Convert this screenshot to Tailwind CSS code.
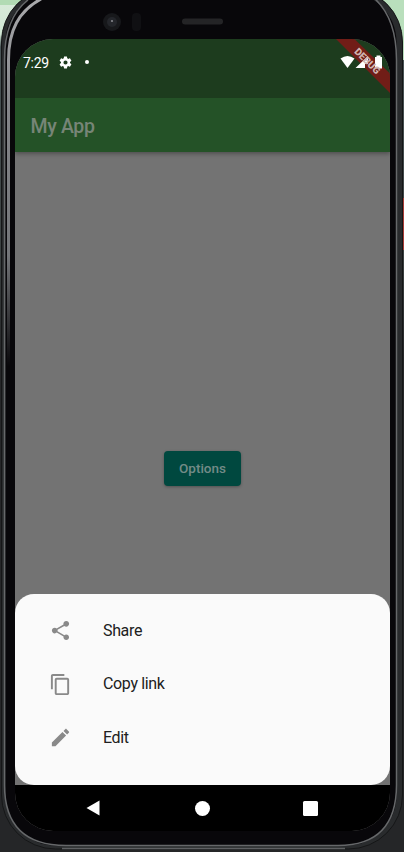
<!DOCTYPE html>
<html lang="en">
<head>
<meta charset="utf-8">
<title>My App</title>
<script src="https://cdn.jsdelivr.net/npm/@tailwindcss/browser@4"></script>
</head>
<body class="w-[404px] h-[852px] overflow-hidden bg-[#252628] font-['Roboto',sans-serif]">
<main class="relative w-[404px] h-[852px] overflow-hidden px-[15px] pt-[39px]">
  <svg class="absolute inset-0" width="404" height="852" viewBox="0 0 404 852" fill="none">
    <defs>
      <linearGradient id="outside" x1="0" y1="0" x2="0" y2="852" gradientUnits="userSpaceOnUse">
        <stop offset="0" stop-color="#d8ead9"/><stop offset=".04" stop-color="#d2e8d5"/><stop offset=".055" stop-color="#4a5557"/><stop offset=".3" stop-color="#3c4242"/><stop offset=".42" stop-color="#252628"/><stop offset="1" stop-color="#252628"/>
      </linearGradient>
      <linearGradient id="rim" x1="0" y1="0" x2="0" y2="852" gradientUnits="userSpaceOnUse">
        <stop offset="0" stop-color="#aaaaad"/><stop offset=".12" stop-color="#85868a"/><stop offset=".3" stop-color="#737578"/><stop offset=".43" stop-color="#08070a"/><stop offset="1" stop-color="#08070a"/>
      </linearGradient>
    </defs>
    <path d="M0 0h404v852H0z" fill="url(#outside)"/>
    <path d="M0 0h45v5H0z" fill="#b2dbb4"/>
    <path d="M370 0h34v60h-34z" fill="#b9dfbc"/>
    <rect x="1.5" y="-12" width="401" height="861" rx="54" fill="#292b2d" stroke="#151617"/>
    <path d="M62 848.5H345" stroke="#5e6062" stroke-width="1.5"/>
    <rect x="5.5" y="-8" width="391" height="853.5" rx="50" fill="#08070a"/>
    <path d="M28 0Q4.5 18 4.5 60V785Q4.5 845.5 66 845.5H338Q396.5 845.5 396.5 785V60Q396.5 18 374-2" stroke="#66686a" stroke-width="1.5"/>
    <path d="M8.5 370V60C8.5 30 19 11 41-1" stroke="url(#rim)" stroke-width="3"/>
    <path d="M403 198h1v52h-1z" fill="#a83a34"/>
    <circle cx="112" cy="22" r="9" fill="#17181b"/><circle cx="112" cy="22" r="5" fill="#24262b"/><circle cx="112" cy="21" r="1.1" fill="#85868c"/>
    <rect x="132" y="13" width="9" height="18" rx="4" fill="#101013"/>
    <rect x="182" y="18.5" width="41" height="6" rx="3" fill="#242426"/>
  </svg>

  <section class="relative flex h-[792px] w-[375px] flex-col overflow-hidden rounded-[38px] bg-[#737373]">
    <header class="relative z-10 shadow-[0_2px_4px_rgba(0,0,0,.3)]">
      <div class="flex h-[59px] items-start bg-[#1d3c1e] pl-[8px] pt-[15px] text-white">
        <span class="w-[35px] text-[14px] leading-[19px] tracking-[-.3px]">7:29</span>
        <svg class="mt-[1px]" width="15" height="15" viewBox="0 0 24 24" fill="currentColor"><path d="M19.14 12.94c.04-.3.06-.61.06-.94s-.02-.64-.07-.94l2.03-1.58c.18-.14.23-.41.12-.61l-1.92-3.32c-.12-.22-.37-.29-.59-.22l-2.39.96c-.5-.38-1.03-.7-1.62-.94L14.4 2.81c-.04-.24-.24-.41-.48-.41h-3.84c-.24 0-.43.17-.47.41l-.36 2.54c-.59.24-1.13.57-1.62.94l-2.39-.96c-.22-.08-.47 0-.59.22L2.74 8.87c-.12.21-.08.47.12.61l2.03 1.58c-.05.3-.09.63-.09.94s.02.64.07.94l-2.03 1.58c-.18.14-.23.41-.12.61l1.92 3.32c.12.22.37.29.59.22l2.39-.96c.5.38 1.03.7 1.62.94l.36 2.54c.05.24.24.41.48.41h3.84c.24 0 .44-.17.47-.41l.36-2.54c.59-.24 1.13-.56 1.62-.94l2.39.96c.22.08.47 0 .59-.22l1.92-3.32c.12-.22.07-.47-.12-.61zM12 15.3a3.3 3.3 0 1 1 0-6.6 3.3 3.3 0 0 1 0 6.6z"/></svg>
        <i class="ml-[12px] mt-[6px] size-[4px] rounded-full bg-white"></i>
      </div>
      <div class="flex h-[54px] items-center bg-[#245227] pl-[15.5px] pt-[4px]"><h1 class="text-[19.5px] font-medium leading-6 tracking-[-.35px] text-[#778577]">My App</h1></div>
    </header>

    <div class="relative min-h-0 flex-1">
      <div class="flex justify-center pt-[299px]"><button class="h-[35px] w-[77px] rounded-[4px] bg-[#00483f] text-[13.5px] font-medium text-[#738b87] shadow-[0_1px_3px_rgba(0,0,0,.3)]">Options</button></div>
    </div>

    <ul class="h-[191px] shrink-0 rounded-[19px] bg-[#fafafa] pt-[10px] text-[16px] tracking-[-.35px] text-[#202020]">
      <li class="flex h-[53.5px] items-center gap-[31px] pl-[34px]"><svg width="23" height="23" viewBox="0 0 24 24" fill="#898989"><path d="M18 16.08c-.76 0-1.44.3-1.96.77L8.91 12.7c.05-.23.09-.46.09-.7s-.04-.47-.09-.7l7.05-4.11c.54.5 1.25.81 2.04.81 1.66 0 3-1.34 3-3s-1.34-3-3-3-3 1.34-3 3c0 .24.04.47.09.7L8.04 9.81C7.5 9.31 6.79 9 6 9c-1.66 0-3 1.34-3 3s1.34 3 3 3c.79 0 1.5-.31 2.04-.81l7.12 4.16c-.05.21-.08.43-.08.65 0 1.61 1.31 2.92 2.92 2.92s2.92-1.31 2.92-2.92-1.31-2.92-2.92-2.92z"/></svg><span>Share</span></li>
      <li class="flex h-[53.5px] items-center gap-[31px] pl-[34px]"><svg width="23" height="23" viewBox="0 0 24 24" fill="#898989"><path d="M16 1H4c-1.1 0-2 .9-2 2v14h2V3h12V1zm3 4H8c-1.1 0-2 .9-2 2v14c0 1.1.9 2 2 2h11c1.1 0 2-.9 2-2V7c0-1.1-.9-2-2-2zm0 16H8V7h11v14z"/></svg><span>Copy link</span></li>
      <li class="flex h-[53.5px] items-center gap-[31px] pl-[34px]"><svg width="23" height="23" viewBox="0 0 24 24" fill="#898989"><path d="M3 17.25V21h3.75L17.81 9.94l-3.75-3.75L3 17.25zM20.71 7.04c.39-.39.39-1.02 0-1.41l-2.34-2.34c-.39-.39-1.02-.39-1.41 0l-1.83 1.83 3.75 3.75 1.83-1.83z"/></svg><span>Edit</span></li>
    </ul>
    <nav class="flex h-[46px] shrink-0 items-center gap-[95px] bg-black pl-[71px]">
      <svg width="14" height="16" viewBox="0 0 14 16"><path d="M13.5.5v15L.5 8z" fill="#fff"/></svg>
      <i class="size-[15px] rounded-full bg-white"></i>
      <i class="-ml-[2px] size-[15px] rounded-[1.5px] bg-white"></i>
    </nav>

    <svg class="absolute left-[315px] top-0 z-20" width="60" height="60" viewBox="315 0 60 60">
      <path d="M321 0h18.5L375 34.5v19.5z" fill="#711d17"/>
      <g fill="#fff"><path d="M325.5 19.5Q332.5 14.5 339.5 19.5L332.5 29z"/><path fill-rule="evenodd" d="M353 17v12h-12.5zM350 25h3v4h-3z"/><path d="M360 18h1.5v-1.5h4V18h1.5v11.5h-7z"/></g>
      <text x="352.5" y="22" transform="rotate(45 352.5 22)" text-anchor="middle" dominant-baseline="central" font-family="Roboto" font-size="10" font-weight="900" fill="#d0b5b2">DEBUG</text>
    </svg>
  </section>
</main>
</body>
</html>
